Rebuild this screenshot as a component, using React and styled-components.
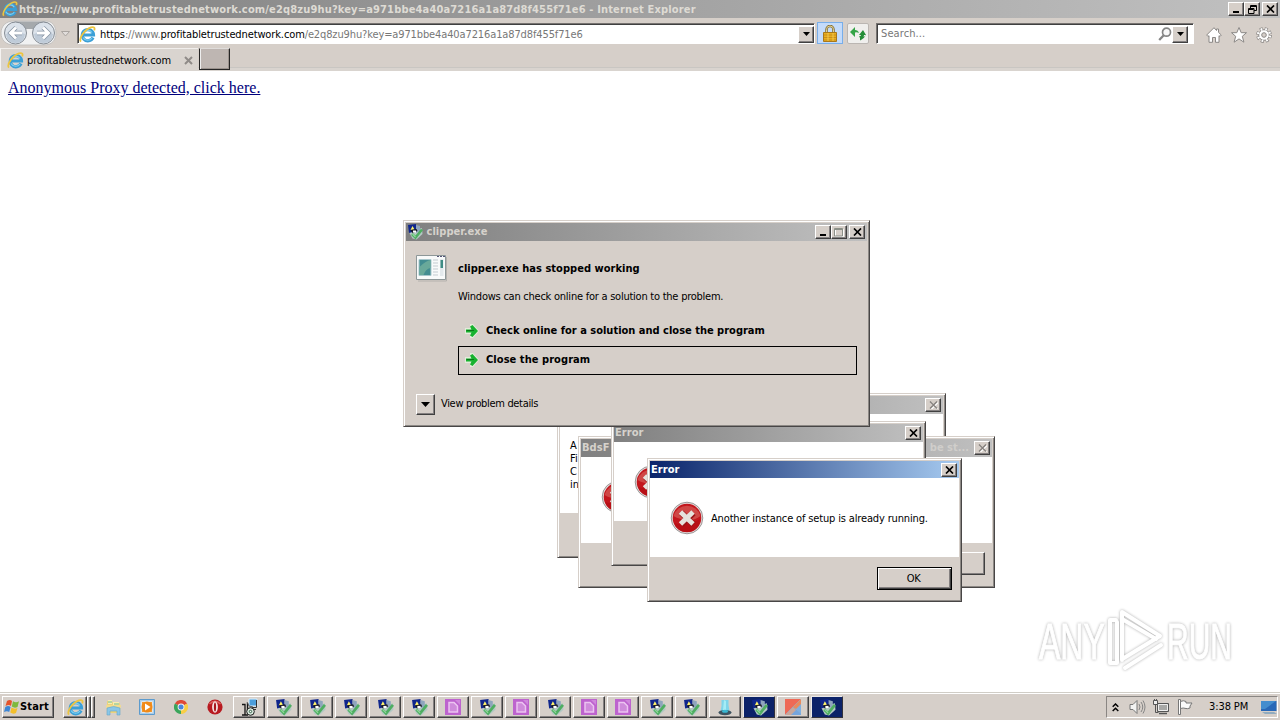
import React from 'react';
import styled, { createGlobalStyle, css } from 'styled-components';

const GlobalStyle = createGlobalStyle`
    * { box-sizing: border-box; }

    body {
        margin: 0;
        overflow: hidden;
        background: white;
        font-family: "DejaVu Sans Condensed", "DejaVu Sans", sans-serif;
        font-stretch: condensed;
        font-size: 11px;
        color: black;
    }

    svg { display: block; flex: none; }
`;

const FACE = '#d6cfc9';

const raised = css`
    background: ${FACE};
    border: 1px solid;
    border-color: #fff #404040 #404040 #fff;
    box-shadow: inset -1px -1px #848080;
`;

const sunken = css`
    background: white;
    border: 1px solid;
    border-color: #777371 #fff #fff #777371;
    box-shadow: inset 1px 1px #404040;
`;

/* ---------- icons ---------- */

const IeIcon = ({ size = 17 }) => (
    <svg width={size} height={size} viewBox="0 0 17 17">
        <path d="M14 11.500A5.600 5.600 0 1 1 14.500 9H5" fill="none" stroke="#3b9fd6" strokeWidth="3.200" />
        <path d="M13 12A5.300 5.300 0 0 1 4 11.500M4.500 6.500A5 5 0 0 1 13 6.500" fill="none" stroke="#7fd0f2" strokeWidth="1.200" />
        <path d="M1.900 15.600C-.6 12.700 5.700 3.300 12 1.300c3.200-.9 4.200.7 3.200 3" fill="none" stroke="#edc540" strokeWidth="1.800" />
    </svg>
);

const CheckIcon = ({ size = 17 }) => (
    <svg width={size} height={size} viewBox="0 0 16 16">
        <path d="M2 8l6-2 7-2 .500 6-6 5.500-4-1z" fill="#b4c8c4" />
        <path d="M1 1l8-1v7l-7 2z" fill="#10268c" />
        <path d="M9 1l4 1v5l-4 2z" fill="#8fa5bd" />
        <path d="M5.500 2l2 3.500-4 .500z" fill="#fff36a" />
        <path d="M3.500 6l6-1 1 2-5 2z" fill="#1a1a22" />
        <path d="M6 6.500h3v2H6z" fill="#fff" />
        <path d="M5 10l3.500 3.500L15 5.500" fill="none" stroke="#4fae62" strokeWidth="2.600" />
        <path d="M5.500 10l3 3" stroke="#8fd89a" strokeWidth="1.200" />
    </svg>
);

const PurpleIcon = () => (
    <svg width="16" height="16" viewBox="0 0 16 16">
        <path d="M0 0h16v16H0z" fill="#bd63ce" />
        <path d="M4 3.500h5l3.500 3.500v6H4z" fill="#cf8bdb" stroke="#ecc4f1" strokeWidth="1.500" />
        <path d="M10 1l5 5V1z" fill="#cf86dc" />
    </svg>
);

const InstallerIcon = () => (
    <svg width="17" height="18" viewBox="0 0 17 18">
        <path d="M8 1h8v7H8z" fill="#4c9edb" stroke="#d8eefc" />
        <path d="M15.500 2v7.500H11v2h4" fill="none" stroke="#333" />
        <path d="M1 6.500h3v10M1 17h6M6.500 5v9" fill="none" stroke="#151515" strokeWidth="1.300" />
        <circle cx="9.500" cy="13.500" r="3.800" fill="#d9e8dd" stroke="#1b1b1b" />
        <circle cx="9.500" cy="13.500" r="1.200" fill="#fff" stroke="#2d5d41" />
        <path d="M6 4l2 4 4 1" fill="none" stroke="#555" />
    </svg>
);

const WizardIcon = () => (
    <svg width="16" height="17" viewBox="0 0 16 17">
        <path d="M4.500 1h7l0 5 1 6H3.500l1-5z" fill="#7fd5ea" />
        <path d="M7 1l2 1v9H6z" fill="#a6ecf5" />
        <ellipse cx="8" cy="13.600" rx="6.500" ry="2.600" fill="#3d5361" />
        <ellipse cx="8" cy="12.300" rx="3" ry="1.500" fill="#38b7d2" />
    </svg>
);

const AnyDeskIcon = () => (
    <svg width="16" height="16" viewBox="0 0 16 16">
        <path d="M0 0h16L0 16z" fill="#ee6956" />
        <path d="M8 7.500L16 14v2H0z" fill="#76a5dc" />
        <path d="M8 7.500L16 0v15z" fill="#7fb0e0" />
        <path d="M0 16l8-8 3 3-5 5z" fill="#c9a79a" />
        <path d="M8 8l8-8v5l-5 5z" fill="#e98a5c" />
    </svg>
);

const ExplorerIcon = () => (
    <svg width="17" height="17" viewBox="0 0 17 17">
        <path d="M2 2h5l1 2h7v10H2z" fill="#ecd37b" />
        <path d="M3 1h4v4H3zM8 3h6v3H8z" fill="#f9edb0" />
        <path d="M3 3h4M9 5h5" stroke="#72bc8f" />
        <path d="M1 6h15l-1 6H2z" fill="#f3dc8c" />
        <path d="M2 9q7-3 13 0v7h-3v-4H5v4H2z" fill="#8ac6e7" stroke="#62a6ca" strokeWidth=".6" />
    </svg>
);

const PlayerIcon = () => (
    <svg width="16" height="16" viewBox="0 0 16 16">
        <path d="M.5.5h15v15H.5z" fill="#a9cdea" stroke="#5d9bcd" />
        <path d="M2.500 2.500h11v11h-11z" fill="#f29a33" stroke="#dbe6ee" />
        <circle cx="8" cy="8" r="5.500" fill="#f08a19" />
        <path d="M6 4.500v7L11.500 8z" fill="#fff" />
    </svg>
);

const ChromeIcon = () => (
    <svg width="14" height="14" viewBox="0 0 14 14">
        <path d="M7 7L.9 3.500A7 7 0 0 1 13.100 3.500z" fill="#df4937" />
        <path d="M7 7l6.100-3.500A7 7 0 0 1 7 14z" fill="#f8ce45" />
        <path d="M7 7v7A7 7 0 0 1 .9 3.500z" fill="#3aa55b" />
        <circle cx="7" cy="7" r="3.400" fill="#f3f3ef" />
        <circle cx="7" cy="7" r="2.500" fill="#4a86dd" />
    </svg>
);

const OperaIcon = () => (
    <svg width="16" height="16" viewBox="0 0 16 16">
        <circle cx="8" cy="8" r="7.600" fill="#b81a20" />
        <path d="M2.500 5q5.500-5.500 11 0" fill="none" stroke="#dc6361" strokeWidth="1.500" />
        <ellipse cx="8" cy="8" rx="2.900" ry="5.700" fill="#f5e6e5" />
        <ellipse cx="8" cy="8" rx="1.100" ry="4.500" fill="#a7161c" />
    </svg>
);

const FlagIcon = () => (
    <svg width="16" height="16" viewBox="0 0 16 16">
        <path d="M3 2q3-2 5 0L7 7Q5 5 1.500 7z" fill="#e5542c" />
        <path d="M9 2.300q3 2 6 0L13.500 8q-3 1.500-5.700-.5z" fill="#7eb93c" />
        <path d="M1.300 8q3-2 5.300 0l-1.400 5Q3 11.500 0 13z" fill="#3d86d5" />
        <path d="M7.500 8.500q3 2 6 .5l-1.500 5q-3 1.500-5.700-.5z" fill="#f3bf2b" />
    </svg>
);

const CloseGlyph = ({ faded }) => (
    <svg width="9" height="8" viewBox="0 0 9 8">
        {faded && <path d="M2 1.500l7 7M9 1.500l-7 7" stroke="#fff" strokeWidth="1.400" />}
        <path d="M1 .5l7 7M8 .5l-7 7" stroke={faded ? '#85807d' : '#000'} strokeWidth={faded ? 1.400 : 1.700} />
    </svg>
);

const MinGlyph = () => (
    <svg width="9" height="8" viewBox="0 0 9 8"><path d="M1 6h6v2H1z" /></svg>
);

const MaxGlyph = () => (
    <svg width="10" height="9" viewBox="0 0 10 9">
        <path d="M1.500 1.500h8v7h-8z" fill="none" stroke="#fff" />
        <path d="M.5.5h8v7.500h-8zM1 1.500h7" fill="none" stroke="#8c9088" />
    </svg>
);

const RestoreGlyph = () => (
    <svg width="9" height="9" viewBox="0 0 9 9">
        <path d="M2.500 3V.5h6v5H6M2.500 1.500h6" fill="none" stroke="#000" />
        <path d="M.5 3.500h5.500v5H.5zM.5 4.500h5" fill="none" stroke="#000" />
    </svg>
);

const DownGlyph = ({ width = 7 }) => (
    <svg width={width} height={width > 8 ? 5 : 4} viewBox="0 0 8 4" preserveAspectRatio="none"><path d="M0 0h8L4 4z" /></svg>
);

const ArrowIcon = () => (
    <svg width="14" height="14" viewBox="0 0 14 14">
        <path d="M0 4h5V0h3l6 7-6 7H5v-4H0z" fill="#e3ecda" />
        <path d="M1 5.500h5.500L5 2.500 7.500 1 13 7l-5.500 6L5 11.500l1.500-3H1z" fill="#17b22f" />
        <path d="M1.500 6.500h7.500" stroke="#087918" />
    </svg>
);

const ErrorIcon = () => (
    <svg width="34" height="34" viewBox="0 0 34 34">
        <circle cx="17" cy="17" r="15.800" fill="#e4dede" stroke="#858080" strokeWidth=".8" />
        <circle cx="17" cy="17" r="14.300" fill="#c3161d" />
        <path d="M3.500 15a14 14 0 0 1 27 0q-6 5-14 4T3.500 15" fill="#cf4746" />
        <path d="M4 22q12 4 26-4-1 13-13 13Q7 31 4 22" fill="#b80f16" />
        <path d="M11.500 12l12 11.500M23.500 12L11.500 23.500" stroke="#9a1519" strokeWidth="6" />
        <path d="M10.500 11l12.500 12M23 11L10.500 23" stroke="#e6e2dd" strokeWidth="4.800" />
    </svg>
);

const ProgramIcon = () => (
    <svg width="32" height="28" viewBox="0 0 32 28">
        <path d="M.5 1.500h29v24H.5z" fill="#f8fafa" stroke="#8d9798" />
        <path d="M30.500 3v24H2" fill="none" stroke="#b4b1ad" />
        <path d="M3 5.500h12v16H3z" fill="#438d91" stroke="#a8c7cc" />
        <path d="M3.500 21V13q6-6 11-7v8q-5 1-7 7z" fill="#69a99a" />
        <path d="M17 6h5M17 9h5M17 12h5M17 15h5M17 18h5M17 21h5" stroke="#c3cbd0" />
        <path d="M24 5h3.500v17H24z" fill="#e3e9ec" />
        <path d="M24.500 6h2.500v8h-2.500z" fill="#3f8c84" />
        <path d="M21 2.500h2M24 2.500h2M27 2.500h2" stroke="#557" />
    </svg>
);

const NavIcon = () => (
    <svg width="72" height="26" viewBox="0 0 72 26">
        <path d="M1 13C1 6 6 1 14 1h32c6 0 10 5 10 12s-4 12-12 12H14C6 25 1 20 1 13" fill="#f0f1f2" stroke="#c4c2c0" />
        <path d="M15 1.500h29q5 .5 7 4-5-2-9-1.500-6 1-8 5h-9q-2-4-7-5-5-.5-9 2 3-4 6-4.500" fill="#a5a9ac" />
        <circle cx="15.500" cy="13" r="11" fill="#dbe2ea" stroke="#858c94" />
        <circle cx="43.500" cy="13" r="11" fill="#dbe2ea" stroke="#858c94" />
        <path d="M6 14q9-4 19 0-1 9-9.500 9T6 14M34 14q9-4 19 0-1 9-9.500 9T34 14" fill="#bfcbd8" />
        <path d="M22 13H11m5-5.500L10.500 13l5.500 5.500M37 13h11m-5-5.500l5.500 5.500-5.500 5.500" fill="none" stroke="#8795a4" strokeWidth="4.400" />
        <path d="M22 13H11m5-5.500L10.500 13l5.500 5.500M37 13h11m-5-5.500l5.500 5.500-5.500 5.500" fill="none" stroke="#fff" strokeWidth="2.900" />
        <path d="M61.500 11.500h8L65.500 16z" fill="#e1dddb" stroke="#aaa5a1" />
    </svg>
);

const LockIcon = () => (
    <svg width="14" height="17" viewBox="0 0 14 17">
        <path d="M3.500 8V4.500a3.500 3.500 0 0 1 7 0V8" fill="none" stroke="#806d35" strokeWidth="2.500" />
        <path d="M3.500 8V4.500a3.500 3.500 0 0 1 7 0V8" fill="none" stroke="#e4d292" strokeWidth="1" />
        <path d="M.5 7.500h13v9H.5z" fill="#e9ae20" stroke="#a9781a" />
        <path d="M1 10h12M1 12.500h12M1 15h12" stroke="#bb8118" strokeWidth=".7" />
        <path d="M5 8v8M10 8v8" stroke="#f8d25d" strokeWidth=".8" />
    </svg>
);

const RefreshIcon = () => (
    <svg width="16" height="14" viewBox="0 0 16 14">
        <path d="M0 5l5-5v3q3 0 4 3-2-1-4-.500V10z" fill="#35a447" />
        <path d="M16 8q-2 4-6 5.500V11l-1-2q2 .5 2-1H9l4-5 3 5h-2q0 4-4 5.500" fill="#248d37" />
    </svg>
);

const SearchIcon = () => (
    <svg width="14" height="14" viewBox="0 0 14 14">
        <circle cx="8.500" cy="5.200" r="4" fill="#f8f8f8" stroke="#858585" strokeWidth="1.700" />
        <path d="M5.500 8.500L1.200 13" stroke="#858585" strokeWidth="2.300" />
    </svg>
);

const HomeIcon = () => (
    <svg width="16" height="16" viewBox="0 0 16 16">
        <path d="M8 .7L.7 8l1.300 1.500 1-.8V15.300h3.500v-4.800h3v4.800H13V8.700l1 .8L15.300 8l-2.800-2.600V2h-2v1.500z" fill="#fff" stroke="#8b8886" />
    </svg>
);

const StarIcon = () => (
    <svg width="16" height="16" viewBox="0 0 16 16">
        <path d="M8 .5l2.200 5.200h5.300l-4.200 3.600 1.600 5.900L8 11.900l-4.900 3.300 1.600-5.900L.5 5.700h5.300z" fill="#fff" stroke="#8b8886" />
    </svg>
);

const GearIcon = () => (
    <svg width="16" height="16" viewBox="0 0 16 16">
        <circle cx="8" cy="8" r="6.300" fill="none" stroke="#8b8886" strokeWidth="3.200" strokeDasharray="2.900 2.050" />
        <circle cx="8" cy="8" r="5.300" fill="#fff" stroke="#8b8886" />
        <circle cx="8" cy="8" r="6" fill="none" stroke="#fff" strokeWidth="2.400" strokeDasharray="1.700 3.010" strokeDashoffset="-.6" />
        <circle cx="8" cy="8" r="2.300" fill="#d6cfc9" stroke="#8b8886" />
    </svg>
);

const ChevronsIcon = () => (
    <svg width="7" height="9" viewBox="0 0 7 9">
        <path d="M.7 3.700L3.500 1l2.800 2.700M.7 8l2.800-2.700L6.300 8" fill="none" stroke="#000" strokeWidth="1.500" />
    </svg>
);

const SpeakerIcon = () => (
    <svg width="17" height="16" viewBox="0 0 17 16">
        <path d="M1 5.500h3L8 1.500v13l-4-4H1z" fill="#f3f3f2" stroke="#777" />
        <path d="M10 5q2 3 0 6M12 3q3.500 5 0 10M14 1.500q4 6.500 0 13" fill="none" stroke="#858585" />
    </svg>
);

const NetworkIcon = () => (
    <svg width="16" height="16" viewBox="0 0 16 16">
        <path d="M4.500 4.500h11v8h-11z" fill="#a8a8a6" stroke="#555" />
        <path d="M5.500 5.500h9v6h-9z" fill="none" stroke="#eee" />
        <path d="M6 14.500h8" stroke="#555" strokeWidth="1.500" />
        <path d="M.5 1.500h4v4h-4z" fill="#eee" stroke="#555" />
        <path d="M1.500 0v1M3.500 0v1M2.500 6v7.500h3" fill="none" stroke="#555" />
    </svg>
);

const ActionIcon = () => (
    <svg width="16" height="16" viewBox="0 0 16 16">
        <path d="M1.500.5h2v15h-2z" fill="#fff" stroke="#777" />
        <path d="M3.500 2.500q3-1.500 5.500 0v1.500h6l-2 3 0 2q-3 1-4 .5-3-1-5.500 0z" fill="#fafafa" stroke="#777" />
    </svg>
);

const DesktopIcon = () => (
    <svg width="16" height="15" viewBox="0 0 16 15">
        <path d="M0 1h15.500v10H0z" fill="#2868b7" />
        <path d="M0 1h15L4 9H0z" fill="#438dce" />
        <path d="M1 12h12l3 2H4z" fill="#90abbf" />
    </svg>
);

/* ---------- shared parts ---------- */

const Text = styled.span`
    white-space: nowrap;
    letter-spacing: ${p => p.$track || 0}px;
    line-height: 14px;
    color: ${p => p.$color || 'inherit'};
    font-weight: ${p => (p.$bold ? 'bold' : 'normal')};
`;

const CaptionButton = styled.div`
    ${raised}
    width: 16px;
    height: 14px;
    margin-left: ${p => p.$gap || 0}px;
    display: flex;
    align-items: center;
    justify-content: center;
`;

const DropButton = styled.div`
    ${raised}
    width: ${p => p.$width || 16}px;
    height: ${p => p.$height || 17}px;
    flex: none;
    display: flex;
    align-items: center;
    justify-content: center;
`;

const Spacer = styled.div`
    flex: 1;
`;

/* ---------- browser ---------- */

const Screen = styled.div`
    width: 1280px;
    height: 720px;
    position: relative;
    overflow: hidden;
    display: flex;
    flex-direction: column;
`;

const BrowserTitle = styled.div`
    height: 18px;
    padding: 0 2px 0 2px;
    display: flex;
    align-items: center;
    background: linear-gradient(90deg, #808080, #c1c1c1);
`;

const TitleText = styled(Text)`
    margin: 1px 0 0 1px;
    color: #dedbd4;
    font-weight: bold;
`;

const Toolbar = styled.div`
    height: 30px;
    background: ${FACE};
    display: flex;
    align-items: flex-start;
    padding-top: 2px;
`;

const AddressBar = styled.div`
    ${sunken}
    width: 738px;
    height: 21px;
    margin: 3px 0 0 5px;
    padding: 1px 0 0 1px;
    display: flex;
    align-items: center;
`;

const AddressText = styled(Text)`
    margin: 1px 0 0 4px;
    color: #777;

    b {
        font-weight: normal;
        color: #000;
    }
`;

const LockButton = styled.div`
    width: 26px;
    height: 22px;
    margin: 2px 0 0 2px;
    display: flex;
    align-items: center;
    justify-content: center;
    background: #c4dbfa;
    border: 1px solid #78aeea;
`;

const RefreshButton = styled.div`
    width: 22px;
    height: 21px;
    margin: 3px 0 0 4px;
    display: flex;
    align-items: center;
    justify-content: center;
    background: #f0efed;
    border: 1px solid #bbb6b2;
    border-radius: 2px;
`;

const SearchBox = styled.div`
    ${sunken}
    width: 318px;
    height: 21px;
    margin: 3px 0 0 7px;
    padding: 1px 5px 0 4px;
    display: flex;
    align-items: center;
`;

const ToolIcons = styled.div`
    display: flex;
    gap: 9px;
    margin: 7px 8px 0 0;
`;

const TabStrip = styled.div`
    height: 23px;
    flex: none;
    display: flex;
    background: linear-gradient(${FACE} 19px, #c9c6c2 19px 20px, #d9d4cf 20px);
`;

const Tab = styled.div`
    width: 198px;
    height: 23px;
    padding: 1px 5px 0 6px;
    display: flex;
    align-items: center;
    background: #d9d4cf;
    border-top: 1px solid #f1eeec;
    border-left: 1px solid #f5f3f1;
`;

const NewTab = styled.div`
    width: 31px;
    height: 22px;
    margin-left: 1px;
    background: #beb6b2;
    border: 1px solid;
    border-color: #dfdcda #252525 #252525 #252525;
    box-shadow: inset 1px 0 #eee, inset -1px -1px #99918c;
`;

const Page = styled.div`
    flex: 1;
    padding: 8px;
    background: white;
`;

const PageLink = styled.a`
    display: inline-block;
    font-family: "Liberation Serif", serif;
    font-size: 16px;
    line-height: 18px;
    color: #00007c;
    text-decoration: underline;
`;

/* ---------- windows lying on the desktop ---------- */

const Window = styled.div`
    position: absolute;
    left: ${p => p.$x}px;
    top: ${p => p.$y}px;
    width: ${p => p.$w}px;
    height: ${p => p.$h}px;
    display: flex;
    flex-direction: column;
    padding: 2px;
    background: ${FACE};
    border: 1px solid;
    border-color: ${FACE} #484646 #484646 ${FACE};
    box-shadow: inset 1px 1px #fff, inset -1px -1px #8d8985;
`;

const WindowTitle = styled.div`
    height: ${p => p.$h || 18}px;
    flex: none;
    padding: 0 2px 0 1px;
    display: flex;
    align-items: center;
    color: ${p => (p.$active ? '#fff' : '#d6d2cc')};
    background: ${p => (p.$active
        ? 'linear-gradient(90deg, #0a246a, #a6caf0)'
        : 'linear-gradient(90deg, #808080, #c0c0c0)')};
`;

const Message = styled.div`
    height: ${p => p.$h}px;
    flex: none;
    padding: ${p => p.$pad || '23px 0 0 20px'};
    display: flex;
    align-items: flex-start;
    gap: 7px;
    background: white;
`;

const MessageText = styled(Text)`
    margin-top: 11px;
`;

const Footer = styled.div`
    flex: 1;
    display: flex;
    justify-content: flex-end;
    padding: ${p => p.$top || 9}px 7px 0 0;
`;

const PushButton = styled.div`
    width: 75px;
    height: 23px;
    padding-right: 2px;
    display: flex;
    align-items: center;
    justify-content: center;
    background: ${FACE};
    border: 1px solid;
    border-color: ${p => (p.$default ? '#000' : '#fff #404040 #404040 #fff')};
    box-shadow: ${p => (p.$default
        ? 'inset 1px 1px #fff, inset -1px -1px #404040, inset -2px -2px #848080'
        : 'inset -1px -1px #848080')};
`;

const ReportBody = styled.div`
    flex: 1;
    display: grid;
    grid-template-columns: 42px 1fr;
    grid-template-rows: 107px auto;
    padding: 13px 10px 0 10px;
`;

const ReportMain = styled.div`
    display: flex;
    flex-direction: column;
    height: 124px;
`;

const Headline = styled(Text)`
    font-weight: bold;
    margin: 8px 0 14px 0;
`;

const Choice = styled.div`
    height: 29px;
    flex: none;
    margin-top: ${p => p.$top || 0}px;
    display: flex;
    align-items: center;
    gap: 7px;
    padding: 0 0 1px 6px;
    border: 1px solid ${p => (p.$focused ? '#000' : 'transparent')};
`;

const Details = styled.div`
    grid-column: 1 / 3;
    display: flex;
    align-items: center;
    gap: 6px;
    margin-top: 33px;
    height: 21px;
`;

const DetailsText = styled(Text)`
    margin-bottom: 2px;
`;

const Paragraph = styled.div`
    white-space: pre;
    line-height: 13px;
`;

const Watermark = styled.svg`
    position: absolute;
    left: 1020px;
    top: 595px;
    filter: drop-shadow(0 0 1.5px rgba(0, 0, 0, 0.38));
    opacity: 0.85;
`;

/* ---------- taskbar ---------- */

const Taskbar = styled.div`
    height: 27px;
    flex: none;
    display: flex;
    align-items: flex-start;
    padding: 2px 2px 0 2px;
    background: ${FACE};
    border-top: 1px solid #fff;
    box-shadow: 0 -1px #d0cdc6;
`;

const StartButton = styled.div`
    ${raised}
    width: 52px;
    height: 22px;
    padding-left: 1px;
    display: flex;
    align-items: center;
`;

const IeGroup = styled.div`
    display: flex;
    height: 22px;
    margin-left: 9px;
`;

const IeButton = styled.div`
    ${raised}
    width: ${p => p.$w}px;
    display: flex;
    align-items: center;
    justify-content: center;
    overflow: hidden;
`;

const Launch = styled.div`
    width: 34px;
    height: 22px;
    display: flex;
    align-items: center;
    justify-content: center;
`;

const LaunchGroup = styled.div`
    display: flex;
    margin-left: 1px;
`;

const Tasks = styled.div`
    display: flex;
    gap: 2px;
    margin-left: 1px;
`;

const Task = styled.div`
    ${raised}
    width: 32px;
    height: 22px;
    display: flex;
    align-items: center;
    justify-content: center;
    ${p => p.$active && css`
        background: #0c2268;
        border-color: #eceae8 #33323a #33323a #eceae8;
        box-shadow: none;
    `}
`;

const Tray = styled.div`
    width: 172px;
    height: 22px;
    display: flex;
    align-items: center;
    padding-left: 5px;
    border: 1px solid;
    border-color: #8a8683 #fff #fff #8a8683;
`;

const TrayItem = styled.div`
    margin-left: ${p => p.$gap}px;
    display: flex;
`;

const taskIcons = {
    installer: InstallerIcon,
    check: CheckIcon,
    purple: PurpleIcon,
    wizard: WizardIcon,
    anydesk: AnyDeskIcon
};

const tasks = [
    'installer', 'check', 'check', 'check', 'check', 'check', 'purple', 'check', 'purple',
    'check', 'purple', 'purple', 'check', 'check', 'wizard', 'check', 'anydesk', 'check'
];
const activeTasks = [15, 17];

const ErrorWindow = ({ x, y, w = 315, h = 145, title, active, faded, tail, titleHeight, whiteHeight = 79, children, footer, footerTop }) => (
    <Window $x={x} $y={y} $w={w} $h={h}>
        <WindowTitle $active={active} $h={titleHeight}>
            <Text $bold $track={0.05}>{title}</Text>
            <Spacer />
            {tail && <Text $bold $color="#d0cecb">{tail}</Text>}
            <CaptionButton $gap={tail ? 5 : 0}><CloseGlyph faded={faded} /></CaptionButton>
        </WindowTitle>
        <Message $h={whiteHeight}>
            <ErrorIcon />
            {children}
        </Message>
        <Footer $top={footerTop}>{footer}</Footer>
    </Window>
);

class App extends React.Component {

    renderBrowser() {
        return (
            <>
                <BrowserTitle>
                    <IeIcon size={16} />
                    <TitleText $track={0.16}>
                        https://www.profitabletrustednetwork.com/e2q8zu9hu?key=a971bbe4a40a7216a1a87d8f455f71e6 - Internet Explorer
                    </TitleText>
                    <Spacer />
                    <CaptionButton><MinGlyph /></CaptionButton>
                    <CaptionButton><RestoreGlyph /></CaptionButton>
                    <CaptionButton $gap={2}><CloseGlyph /></CaptionButton>
                </BrowserTitle>
                <Toolbar>
                    <NavIcon />
                    <AddressBar>
                        <IeIcon />
                        <AddressText $track={-0.12}>
                            <b>https</b>://www.<b>profitabletrustednetwork.com</b>/e2q8zu9hu?key=a971bbe4a40a7216a1a87d8f455f71e6
                        </AddressText>
                        <Spacer />
                        <DropButton><DownGlyph /></DropButton>
                    </AddressBar>
                    <LockButton><LockIcon /></LockButton>
                    <RefreshButton><RefreshIcon /></RefreshButton>
                    <SearchBox>
                        <Text $color="#777" $track={0.1}>Search...</Text>
                        <Spacer />
                        <SearchIcon />
                        <DropButton><DownGlyph /></DropButton>
                    </SearchBox>
                    <Spacer />
                    <ToolIcons>
                        <HomeIcon />
                        <StarIcon />
                        <GearIcon />
                    </ToolIcons>
                </Toolbar>
                <TabStrip>
                    <Tab>
                        <IeIcon />
                        <Text $track={-0.13}>&nbsp;profitabletrustednetwork.com</Text>
                        <Spacer />
                        <svg width="9" height="9" viewBox="0 0 9 9">
                            <path d="M1 1l7 7M8 1L1 8" stroke="#8f8b88" strokeWidth="2" />
                        </svg>
                    </Tab>
                    <NewTab />
                </TabStrip>
                <Page>
                    <PageLink>Anonymous Proxy detected, click here.</PageLink>
                </Page>
            </>
        );
    }

    renderWindows() {
        return (
            <>
                <Window $x={557} $y={393} $w={389} $h={165}>
                    <WindowTitle>
                        <Spacer />
                        <CaptionButton><CloseGlyph faded /></CaptionButton>
                    </WindowTitle>
                    <Message $h={99} $pad="25px 0 0 10px">
                        <Paragraph>{'A\nFi\nC\nin'}</Paragraph>
                    </Message>
                </Window>
                <ErrorWindow x={578} y={436} w={417} h={152} title="BdsF" tail="be st..." faded whiteHeight={86} footer={<PushButton />} />
                <ErrorWindow x={611} y={421} title="Error" />
                <ErrorWindow
                    x={647}
                    y={458}
                    h={144}
                    title="Error"
                    active
                    titleHeight={17}
                    footerTop={10}
                    footer={<PushButton $default><Text $track={-0.3}>OK</Text></PushButton>}
                >
                    <MessageText $track={-0.15}>Another instance of setup is already running.</MessageText>
                </ErrorWindow>
                <Window $x={403} $y={220} $w={467} $h={207}>
                    <WindowTitle>
                        <CheckIcon size={16} />
                        <Text $bold $track={0.05}>&nbsp;clipper.exe</Text>
                        <Spacer />
                        <CaptionButton><MinGlyph /></CaptionButton>
                        <CaptionButton><MaxGlyph /></CaptionButton>
                        <CaptionButton $gap={2}><CloseGlyph /></CaptionButton>
                    </WindowTitle>
                    <ReportBody>
                        <ProgramIcon />
                        <ReportMain>
                            <Headline $track={0.03}>clipper.exe has stopped working</Headline>
                            <Text $track={-0.24}>Windows can check online for a solution to the problem.</Text>
                            <Choice $top={13}>
                                <ArrowIcon />
                                <Text $bold>Check online for a solution and close the program</Text>
                            </Choice>
                            <Choice $focused>
                                <ArrowIcon />
                                <Text $bold $track={0.06}>Close the program</Text>
                            </Choice>
                        </ReportMain>
                        <Details>
                            <DropButton $width={19} $height={21}><DownGlyph width={9} /></DropButton>
                            <DetailsText $track={-0.33}>View problem details</DetailsText>
                        </Details>
                    </ReportBody>
                </Window>
            </>
        );
    }

    renderWatermark() {
        return (
            <Watermark width="240" height="95" viewBox="-10 -5 240 95">
                <g fill="#fff" stroke="#fff" strokeWidth="1" fontFamily="Liberation Sans" fontSize="50">
                    <text transform="translate(9 59) scale(0.64 1)">ANY</text>
                    <text transform="translate(137 59) scale(0.6 1)">RUN</text>
                </g>
                <g fill="none" stroke="#fff" strokeWidth="4" strokeLinejoin="round" strokeLinecap="round">
                    <path d="M92 60V12l38 24-36 22" />
                    <path d="M86 20h-6v43h7V22" />
                    <path d="M92 19l34 20M95 68l36-23" />
                </g>
            </Watermark>
        );
    }

    renderTaskbar() {
        return (
            <Taskbar>
                <StartButton>
                    <FlagIcon />
                    <Text $bold $track={0.15}>Start</Text>
                </StartButton>
                <IeGroup>
                    <IeButton $w={24}><IeIcon /></IeButton>
                    <IeButton $w={4} />
                    <IeButton $w={4} />
                </IeGroup>
                <LaunchGroup>
                    <Launch><ExplorerIcon /></Launch>
                    <Launch><PlayerIcon /></Launch>
                    <Launch><ChromeIcon /></Launch>
                    <Launch><OperaIcon /></Launch>
                </LaunchGroup>
                <Tasks>
                    {tasks.map((name, i) => {
                        const Icon = taskIcons[name];
                        return <Task key={i} $active={activeTasks.includes(i)}><Icon /></Task>;
                    })}
                </Tasks>
                <Spacer />
                <Tray>
                    <TrayItem $gap={0}><ChevronsIcon /></TrayItem>
                    <TrayItem $gap={10}><SpeakerIcon /></TrayItem>
                    <TrayItem $gap={7}><NetworkIcon /></TrayItem>
                    <TrayItem $gap={8}><ActionIcon /></TrayItem>
                    <TrayItem $gap={16}><Text $track={-0.1}>3:38 PM</Text></TrayItem>
                    <Spacer />
                    <DesktopIcon />
                </Tray>
            </Taskbar>
        );
    }

    render() {
        return (
            <Screen>
                <GlobalStyle />
                {this.renderBrowser()}
                {this.renderWindows()}
                {this.renderWatermark()}
                {this.renderTaskbar()}
            </Screen>
        );
    }
}

export default App;
